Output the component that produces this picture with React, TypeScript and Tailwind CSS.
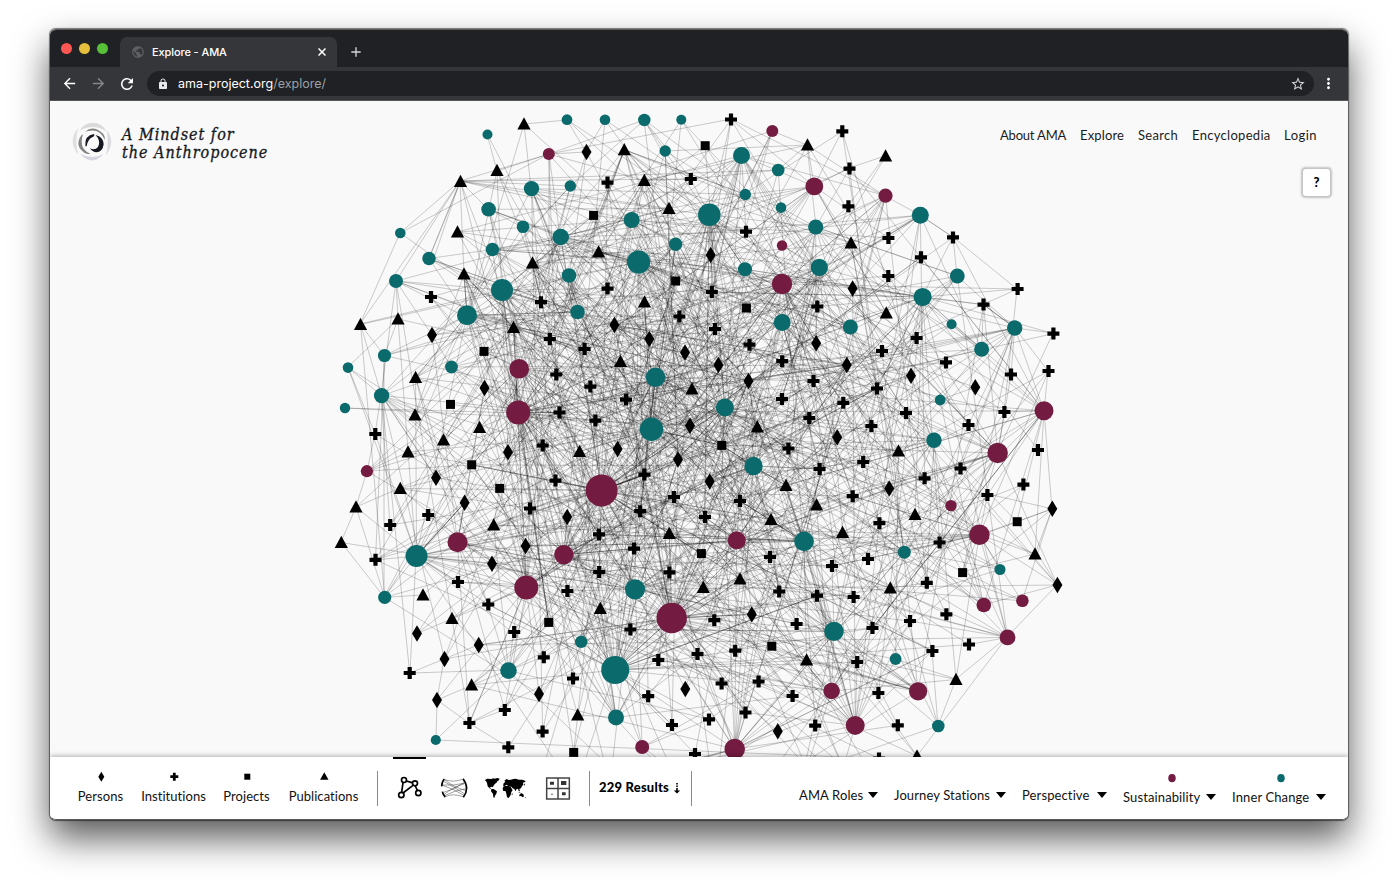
import React from "react";
import {
  MdAdd,
  MdArrowBack,
  MdArrowForward,
  MdLock,
  MdMoreVert,
  MdPublic,
  MdRefresh,
  MdStarBorder,
} from "react-icons/md";

type Pt = [number, number];
type Disc = [number, number, number];

const TEAL: Disc[] = [
  [487.5, 134.5, 5], [567, 119.7, 5.4], [605, 119.7, 5.3], [644.3, 120, 6.2], [681.3, 119.7, 5], [665.2, 151, 5.7],
  [741.5, 155.5, 8.5], [778.2, 170, 6.3], [531.5, 188.6, 7.7], [570.3, 186, 5.7], [745.3, 194.5, 5.7], [781, 207.6, 5.3],
  [488.6, 209.3, 7.3], [631.7, 220, 8], [709.3, 214.8, 11.3], [920.3, 215.3, 8.5], [523, 226.8, 6.3], [815.7, 227, 7.6],
  [400.3, 233, 5.3], [560.7, 237, 8.3], [675.6, 244.3, 6.7], [492.4, 249.5, 6.7], [429, 258.5, 6.7], [638.6, 262, 11.6],
  [819.3, 267.3, 8.6], [745, 269.3, 7], [569, 275.5, 7.3], [957.3, 276, 7.4], [396, 281, 7], [502, 290, 11],
  [922.6, 297, 9.1], [577.5, 312, 7.3], [467, 315.3, 10], [782.2, 322.5, 8.4], [951.6, 324.3, 5], [850.4, 327, 7.5],
  [1014.7, 328, 7.7], [981.6, 349.2, 7.5], [384.5, 355.5, 6.6], [451.5, 367, 6.4], [348, 367.6, 5.3], [655.5, 377.3, 9.7],
  [381.6, 395.6, 7.7], [940.2, 400, 5.4], [724.9, 407.5, 9], [345, 408, 5.2], [651.5, 429.3, 11.7], [934, 440.3, 7.7],
  [753.5, 466, 9.2], [804, 541.4, 9.8], [904.3, 552.2, 6.5], [416.5, 556, 11], [1000, 569.5, 5.5], [635, 589.3, 10.1],
  [384.7, 597.3, 6.6], [834, 631.4, 9.7], [581.2, 641.8, 6.2], [895.6, 659, 5.9], [508.5, 670.6, 8.3], [615.2, 670, 14],
  [616, 717.4, 8], [938.3, 726, 6.3], [435.8, 740, 5.1],
];

const WINE: Disc[] = [
  [772.3, 131, 6], [548.8, 154, 6], [814.3, 186.4, 8.9], [885.5, 195.7, 7.1], [782, 245.5, 5.2], [782, 284, 10.2],
  [519.1, 368.8, 9.8], [518.2, 412.4, 12], [1044, 410.8, 9.5], [997.7, 453, 10.2], [366.9, 471.2, 6.1], [601.6, 490.5, 16],
  [951, 505.6, 5.7], [979.4, 534.8, 10.3], [736.7, 540.3, 9], [457.5, 542.3, 10], [563.8, 554.6, 9.6], [526.3, 587.6, 12],
  [1022.4, 600.8, 6.3], [983.8, 605, 7.3], [671.7, 618, 15.2], [1007.5, 637.4, 7.9], [831.6, 691, 8.3], [918.1, 691.3, 9.1],
  [855.2, 725.4, 9.5], [642.2, 747, 7], [734.7, 749, 10.3],
];

const TRIANGLES: Pt[] = [
  [524, 124], [497, 170.5], [460.5, 181.5], [457.5, 232], [464, 274], [532.5, 263], [624.3, 149.7], [644.3, 180.5],
  [669, 208.5], [598.6, 252], [644.5, 302], [807.5, 145], [885.6, 156], [851, 243], [886.3, 313], [360.5, 324.5],
  [398, 319], [513.5, 327.5], [415.6, 377.5], [620.5, 361.5], [692, 389], [415, 415], [479.6, 427.5], [443.5, 440],
  [408, 452], [579.6, 451.5], [757.3, 427], [400.3, 488.5], [356, 507], [493.7, 525], [341.3, 542.5], [898.5, 451],
  [786, 485.5], [816.6, 505], [771, 519.5], [915, 514.5], [842.6, 532.5], [669.3, 533.5], [1035, 554], [703.3, 587.5],
  [740, 579], [890.3, 588], [423, 595], [452, 618.5], [600.3, 608.5], [806.6, 660], [956, 679.5], [471.6, 685],
  [577.7, 715], [917, 756],
];

const DIAMONDS: Pt[] = [
  [586.5, 152], [710.7, 255], [614.4, 325], [852.6, 288.5], [816.2, 343.3], [846.8, 365], [911, 375.8], [975.3, 387.2],
  [432, 335], [649.3, 339], [685, 352.5], [718.4, 365], [748.5, 381], [484.5, 388], [690, 425.7], [678, 459.5],
  [617.6, 449], [508, 452.3], [837.2, 437.3], [436, 477.7], [464.6, 502.7], [709.7, 481.5], [889.2, 488.5], [567.2, 517],
  [1052.3, 508.8], [525.6, 546], [492, 563.8], [1057.4, 585], [751.8, 614.4], [417, 633.5], [478.7, 645], [444.5, 659],
  [539, 694], [685.3, 689], [437, 700], [777.8, 731.3],
];

const SQUARES: Pt[] = [
  [705.2, 145.7], [593.6, 215.4], [675.6, 281], [746.4, 308], [484, 351.4], [450.5, 404.4], [471.7, 464.8],
  [499.7, 488.4], [721.8, 445.4], [1017.2, 521.7], [701.4, 553.6], [962.6, 572.6], [548.7, 622.4], [771.8, 646.2],
  [573.7, 752.4],
];

const CROSSES: Pt[] = [
  [731, 119.5], [842.3, 131.3], [849.5, 168.6], [848.4, 206.3], [888.4, 238], [953, 237.4], [921, 257.3], [888.3, 276],
  [1017.6, 289], [983.5, 304.6], [607.5, 182.6], [690.8, 179], [746, 231.7], [431, 297], [541, 302.2], [607.5, 288.6],
  [711.8, 292], [817.3, 306.5], [679.4, 316.5], [715, 329], [1053.4, 333.6], [549.8, 339], [584.6, 349], [749.5, 344.7],
  [916.6, 338], [882, 351], [946, 362.4], [782.2, 361.2], [556.3, 374.5], [1011, 374.5], [1048.5, 371], [590.4, 386.6],
  [813.5, 381], [877, 388.5], [626, 399.6], [782, 399], [843.3, 402.8], [559.5, 412.5], [595.4, 420.6], [906, 413],
  [1004.4, 412], [968.5, 425], [809.3, 418], [871.4, 426], [375.3, 434], [542.7, 445.5], [788.4, 448.5], [1038, 450],
  [863.2, 462], [819.6, 469], [960.5, 468.5], [644.4, 474.6], [555.5, 480.6], [924.6, 478.3], [1023.4, 484.6],
  [674, 497], [852.7, 496.2], [740, 501], [987.4, 495], [530, 508.5], [640.2, 511.2], [428.2, 515], [705, 517],
  [879.4, 523.2], [390.2, 525], [599, 534.4], [634, 548.6], [939.6, 542.5], [770, 557], [868, 559], [375.5, 559.8],
  [832, 566], [599.2, 572], [669.4, 572.4], [458, 582], [926.8, 582.8], [567.4, 591], [779.2, 591.5], [817, 595.7],
  [853.6, 597], [488.3, 604.5], [946.4, 614.3], [910, 621], [714.3, 620.2], [796.6, 624], [872.5, 628], [514.2, 632],
  [630.4, 629.5], [969, 644.5], [932.4, 651], [735.2, 650.7], [543.8, 657.3], [697.5, 654], [658.3, 660], [857.2, 662],
  [409.7, 673], [573, 678.5], [721.6, 683.5], [758.6, 681.5], [878.4, 693], [792.6, 696], [648.2, 696.2], [504.8, 710],
  [745.5, 712.5], [709, 719.4], [672, 725], [469.4, 723], [815.2, 725.6], [897.8, 725.3], [542.6, 731.6],
  [508.3, 747.3], [695, 754], [879, 758.5],
];

const BELOW: Pt[] = [
  [540, 778], [575, 790], [610, 785], [645, 800], [680, 790], [715, 800], [760, 790], [800, 790], [840, 780], [880, 790],
  [805, 765], [842, 765],
];

const RIM_LINKS: [number, number, number, number][] = [
  [524, 124, 567, 120], [524, 124, 531, 188], [487, 134, 497, 171], [460, 181, 400, 233], [400, 233, 360, 324],
  [460, 181, 396, 281], [460, 181, 429, 258], [460, 181, 549, 154], [460, 181, 502, 290], [460, 181, 464, 274],
  [460, 181, 488, 209], [460, 181, 434, 258], [460, 181, 631, 220], [460, 181, 778, 170], [460, 181, 709, 215],
  [460, 181, 570, 186], [460, 181, 691, 179], [460, 181, 745, 231], [497, 171, 549, 154], [497, 171, 508, 452],
  [497, 171, 577, 312], [549, 154, 644, 120], [549, 154, 731, 119], [549, 154, 586, 152], [549, 154, 549, 339],
  [549, 154, 560, 237], [567, 120, 586, 152], [605, 120, 586, 152], [605, 120, 669, 208], [681, 120, 705, 146],
  [644, 120, 691, 179], [644, 120, 660, 250], [644, 120, 745, 269], [731, 119, 885, 196], [731, 119, 711, 255],
  [772, 131, 807, 145], [772, 131, 607, 183], [772, 131, 745, 231], [842, 131, 814, 186], [807, 145, 885, 196],
  [807, 145, 665, 151], [807, 145, 778, 170], [807, 145, 816, 227], [849, 168, 885, 156], [849, 168, 814, 186],
  [885, 156, 848, 206], [885, 196, 920, 215], [920, 215, 953, 237], [953, 237, 1017, 289], [953, 237, 957, 276],
  [953, 237, 922, 297], [1017, 289, 1004, 412], [1017, 289, 922, 297], [957, 276, 1015, 328], [983, 304, 1015, 328],
  [1015, 328, 1053, 333], [1053, 333, 997, 453], [1048, 371, 1044, 411], [1015, 328, 1048, 371],
  [348, 367, 398, 319], [348, 367, 375, 434], [345, 408, 518, 413], [375, 434, 381, 395], [375, 434, 367, 471],
  [367, 471, 356, 507], [367, 471, 408, 452], [367, 471, 472, 465], [356, 507, 341, 542], [356, 507, 416, 556],
  [341, 542, 384, 597], [384, 597, 416, 556], [384, 597, 428, 515], [375, 560, 416, 556], [410, 673, 416, 556],
  [410, 673, 508, 670], [410, 673, 478, 645], [437, 700, 436, 740], [437, 700, 508, 670], [437, 700, 444, 659],
  [469, 723, 437, 700], [469, 723, 504, 710], [469, 723, 508, 747], [384, 597, 539, 694], [384, 597, 457, 542],
  [938, 726, 932, 651], [938, 726, 956, 679], [938, 726, 840, 760], [956, 679, 1007, 637], [956, 679, 895, 659],
  [1007, 637, 1057, 585], [983, 605, 1057, 585], [1052, 509, 1044, 411], [1052, 509, 979, 535], [1052, 509, 1035, 554],
  [1035, 554, 962, 572], [1057, 585, 1017, 521], [1022, 601, 979, 535], [1022, 601, 1052, 509], [1044, 411, 1017, 521],
  [360, 324, 460, 181], [360, 324, 502, 290], [360, 324, 384, 355], [384, 355, 384, 597], [381, 395, 390, 525],
  [398, 319, 416, 556], [396, 281, 398, 319], [396, 281, 381, 395], [396, 281, 432, 335], [917, 756, 1007, 637],
];

function makeRandom(seed: number) {
  let s = seed;
  return () => {
    s = (s + 0x6d2b79f5) | 0;
    let t = Math.imul(s ^ (s >>> 15), 1 | s);
    t = (t + Math.imul(t ^ (t >>> 7), 61 | t)) ^ t;
    return ((t ^ (t >>> 14)) >>> 0) / 4294967296;
  };
}

function buildLinks() {
  const rnd = makeRandom(229);
  const discs = [...TEAL, ...WINE];
  const marks: Pt[] = [...TRIANGLES, ...DIAMONDS, ...SQUARES, ...CROSSES, ...BELOW];
  const all: Pt[] = [...discs.map(([x, y]) => [x, y] as Pt), ...marks];
  const out: string[] = [];
  const pick = (x: number, y: number, pool: Pt[], reach: number) => {
    for (let i = 0; i < 60; i++) {
      const p = pool[Math.floor(rnd() * pool.length)];
      const d = Math.hypot(p[0] - x, p[1] - y);
      const rim = Math.hypot(p[0] - 700, p[1] - 440) / 370;
      if (d > 20 && rnd() < Math.exp(-d / reach) * (1.15 - rim * 0.8)) return p;
    }
    return null;
  };
  const add = (x: number, y: number, pool: Pt[], reach: number) => {
    const p = pick(x, y, pool, reach);
    if (p) out.push(`M${x} ${y}L${p[0]} ${p[1]}`);
  };
  discs.forEach(([x, y, r]) => {
    const n = Math.round(Math.pow(Math.max(r - 4.4, 0.4), 1.55) * 1.25);
    for (let i = 0; i < n; i++) add(x, y, all, 200);
  });
  const hubs = discs.filter((d) => d[2] > 7.5).map(([x, y]) => [x, y] as Pt);
  marks.forEach(([x, y]) => {
    const inner = Math.hypot(x - 700, y - 430) < 230;
    const n = inner ? 2 : 1;
    for (let i = 0; i < n; i++) add(x, y, hubs, 230);
  });
  const busy: Pt[] = [
    [464, 274], [644.3, 180.5], [624.3, 149.7], [532.5, 263], [846.8, 365], [690, 425.7], [721.8, 445.4], [614.4, 325],
    [678, 459.5], [748.5, 381], [513.5, 327.5], [877, 388.5],
  ];
  busy.forEach(([x, y]) => {
    for (let i = 0; i < 15; i++) add(x, y, all, 190);
  });
  RIM_LINKS.forEach(([a, b, c, d]) => out.push(`M${a} ${b}L${c} ${d}`));
  return out;
}

const LINKS = buildLinks();

function Network() {
  return (
    <svg className="absolute inset-0 h-full w-full" viewBox="50 101 1298 656" preserveAspectRatio="none">
      <g stroke="#000" strokeOpacity=".22" strokeWidth=".9" fill="none">
        {LINKS.map((d, i) => (
          <path key={i} d={d} />
        ))}
      </g>
      <g fill="#0b6a6b">
        {TEAL.map(([x, y, r], i) => (
          <circle key={i} cx={x} cy={y} r={r} />
        ))}
      </g>
      <g fill="#731b41">
        {WINE.map(([x, y, r], i) => (
          <circle key={i} cx={x} cy={y} r={r} />
        ))}
      </g>
      {TRIANGLES.map(([x, y], i) => (
        <path key={i} d={`M${x} ${y - 6.8}l6.6 12.3h-13.2z`} />
      ))}
      {DIAMONDS.map(([x, y], i) => (
        <path key={i} d={`M${x} ${y - 8.2}l5 8.2l-5 8.2l-5 -8.2z`} />
      ))}
      {SQUARES.map(([x, y], i) => (
        <rect key={i} x={x - 4.5} y={y - 4.5} width="9" height="9" />
      ))}
      {CROSSES.map(([x, y], i) => (
        <path key={i} d={`M${x - 6} ${y}h12M${x} ${y - 6}v12`} stroke="#000" strokeWidth="4.2" />
      ))}
    </svg>
  );
}

function Logo() {
  return (
    <svg className="h-10 w-10" viewBox="96 307 120 120" fill="none">
      <path d="M118 334Q132 309 160 309Q188 311 199 335Q180 322 158 322Q136 322 118 334Z" fill="#dadada" />
      <path d="M114 326Q96 347 98 370Q101 391 115 404Q109 386 109 366Q109 346 114 326Z" fill="#dfdfdf" />
      <path d="M201 330Q216 352 213 374Q210 393 197 407Q203 388 203 370Q203 350 201 330Z" fill="#dcdce0" />
      <path d="M120 402Q156 422 191 403Q156 442 120 402Z" fill="#d5d6e0" />
      <path d="M135 337Q158 314 190 343Q196 351 194 361Q182 331 153 333Q143 333 135 337Z" fill="#858585" />
      <path d="M124 347Q102 379 134 400Q143 404 151 402Q125 391 125 367Q125 355 129 344Z" fill="#858585" />
      <path d="M167 346Q190 351 191 374Q188 397 169 398Q157 397 150 386Q165 393 174 382Q184 365 167 346Z" fill="#161821" />
      <path d="M136 379Q133 347 162 343Q166 346 160 351Q143 357 140 380Z" fill="#161821" />
    </svg>
  );
}

const NAV: [string, string][] = [
  ["About AMA", "w-[67px] tracking-[-0.2px]"],
  ["Explore", "w-[45px] tracking-[0.15px]"],
  ["Search", "w-[41px] tracking-[0.3px]"],
  ["Encyclopedia", "w-[79px] tracking-[0.3px]"],
  ["Login", "w-[33px] tracking-[0.45px]"],
];

function Kind({ label, width, children }: { label: string; width: string; children: React.ReactNode }) {
  return (
    <div className={`flex flex-col items-center ${width}`}>
      <svg className="h-3 w-3" viewBox="-6.300 -5.700 12 12">
        {children}
      </svg>
      <span className="mt-[4px] text-[13px] leading-[18px] tracking-[0.050px] whitespace-nowrap">{label}</span>
    </div>
  );
}

function Filter({ label, width, dot }: { label: string; width: string; dot?: string }) {
  return (
    <div className="flex flex-col">
      <div className="flex h-3 justify-center pl-[4px]">
        {dot && (
          <svg className="h-3 w-3" viewBox="-6 -6 12 12">
            <ellipse cy=".2" rx="3.7" ry="4.1" fill={dot} />
          </svg>
        )}
      </div>
      <div className={`flex items-center ${dot ? "mt-[4px]" : "mt-[2px]"}`}>
        <span className={`text-[13px] leading-[18px] tracking-[0.120px] whitespace-nowrap ${width}`}>{label}</span>
        <svg className="ml-[5px] h-[6px] w-[10px]" viewBox="0 0 10 6">
          <path d="M0 0h10L5 6z" />
        </svg>
      </div>
    </div>
  );
}

function BottomBar() {
  return (
    <footer className="relative flex h-[62px] bg-white pl-[27px] font-['Lato','Open_Sans',sans-serif] text-[#111] shadow-[0_-1px_5px_rgba(0,0,0,0.3)] [font-variant-ligatures:none]">
      <div className="flex gap-[18px] pt-[14px]">
        <Kind label="Persons" width="w-[47px]">
          <path d="M0-5l3 5l-3 5l-3-5z" />
        </Kind>
        <Kind label="Institutions" width="w-[63px]">
          <path d="M-4 0h8M0-4v8" stroke="#000" strokeWidth="2.8" />
        </Kind>
        <Kind label="Projects" width="w-[47px]">
          <rect x="-3" y="-3" width="6" height="6" />
        </Kind>
        <Kind label="Publications" width="w-[71px]">
          <path d="M0-4.500l4.200 7.500h-8.400z" />
        </Kind>
      </div>
      <div className="mt-[14px] ml-[18px] h-[35px] w-px bg-[#8a8a8a]" />
      <div className="flex">
        <div className="ml-[15px] flex w-[33px] flex-col items-center border-t-2 border-black pt-[17px]">
          <svg className="h-[23.33px] w-[26.67px]" viewBox="80 92 80 70" fill="none" stroke="#000" strokeWidth="5">
            <path d="M111 107l17 5M101 112L97 141M131 120L101 143M138 122l6 13" />
            <circle cx="104" cy="104" r="7.5" />
            <circle cx="137" cy="114" r="7.5" />
            <circle cx="96" cy="149" r="8" />
            <circle cx="147" cy="143" r="8" />
          </svg>
        </div>
        <svg className="mt-[18.67px] ml-[14px] h-[24px] w-[28px]" viewBox="211 92 84 72" fill="none" stroke="#000">
          <path d="M224 101Q217 108 216 123M218 139Q220 149 227 155M280 100Q301 128 281 156" strokeWidth="5" />
          <path
            d="M225 103Q250 112 279 102M222 108Q250 124 284 145M218 119Q250 122 288 113M219 142Q250 135 286 110M223 148Q250 125 285 115M227 154Q250 143 280 154M219 120Q250 130 283 150M225 151Q255 135 289 130M225 103Q250 125 289 136"
            stroke="#444"
            strokeWidth="1.5"
          />
        </svg>
        <svg className="mt-[18.67px] ml-[16px] h-[24px] w-[43px]" viewBox="343 92 129 72">
          <path d="M345 105L352 100L365 101L371 99L380 102L383 110L378 114L373 119L369 126L365 124L360 127L365 131L362 131L354 123L352 113L349 107Z" />
          <path d="M375 100L383 98L390 100L385 108L380 106Z" />
          <path d="M365 131L372 131L382 138L380 145L376 151L374 158L371 156L370 146L364 138Z" />
          <path d="M399 129L402 123L415 121L423 124L427 132L429 135L425 140L423 149L417 158L412 156L410 145L408 138L400 136Z" />
          <path d="M400 121L402 114L407 109L404 106L411 101L417 104L424 103L431 101L438 100L448 103L458 103L468 107L466 110L460 112L461 119L457 122L454 129L449 131L451 138L447 137L445 130L440 132L438 138L434 131L429 129L425 124L417 123L411 118L405 122Z" />
          <path d="M449 148L455 143L461 147L463 153L459 156L454 152L449 153ZM446 139L454 143L448 142ZM425 146L429 144L428 150ZM463 118L466 114L466 121ZM465 157L468 154L467 159Z" />
        </svg>
        <svg className="mt-[18.67px] ml-[17px] h-[24px] w-[28px]" viewBox="522 92 84 72">
          <path d="M530 98h68v63h-68zM564 98v63M530 129.500h68" fill="none" stroke="#444" strokeWidth="4.500" />
          <path d="M540 109h12v9h-12zM573 107h16v12h-16zM543 145h6v2.500h-6zM576 141h11v9h-11z" fill="#333" />
        </svg>
      </div>
      <div className="mt-[14px] ml-[17px] h-[35px] w-px bg-[#8a8a8a]" />
      <div className="mt-[22px] ml-[9px] flex h-[18px] w-[92px] items-center text-[13px] font-black tracking-[0.200px] whitespace-nowrap text-black">
        <span className="w-[74px]">229 Results</span>
        <svg className="h-[11px] w-[8px]" viewBox="0 0 8 11">
          <path d="M3.200 0h1.600v1.500h-1.600zM3.200 2.600h1.600v1.500h-1.600zM3.200 5.100h1.600v2.300h2.400L4 10.500L.8 7.400h2.400z" />
        </svg>
      </div>
      <div className="mt-[14px] h-[35px] w-px bg-[#8a8a8a]" />
      <div className="ml-auto flex gap-[16px] pt-[15px] pr-[22px]">
        <Filter label="AMA Roles" width="w-[64px]" />
        <Filter label="Journey Stations" width="w-[97px]" />
        <Filter label="Perspective" width="w-[70px]" />
        <Filter label="Sustainability" width="w-[78px]" dot="#731b41" />
        <Filter label="Inner Change" width="w-[79px]" dot="#0b6a6b" />
      </div>
    </footer>
  );
}

function Chrome() {
  return (
    <div className="font-['Inter','Roboto',sans-serif]">
      <div className="flex h-[37px] bg-[#202124]">
        <div className="flex w-[70px] gap-[7px] pt-[13px] pl-[11px]">
          <span className="h-[11px] w-[11px] rounded-full bg-[#fc5753]" />
          <span className="h-[11px] w-[11px] rounded-full bg-[#e5bf3c]" />
          <span className="h-[11px] w-[11px] rounded-full bg-[#57c038]" />
        </div>
        <div className="mt-[7px] flex h-[30px] w-[217px] items-center rounded-t-[7px] bg-[#35363a] pr-[11px] pl-[11px] text-white">
          <MdPublic className="h-[14px] w-[14px] text-[#5f6064]" />
          <span className="ml-[7px] flex-1 pt-[1px] text-[11px] font-medium tracking-[-0.100px]">Explore - AMA</span>
          <svg className="h-[8px] w-[8px]" viewBox="0 0 8 8">
            <path d="M.5.5l7 7M7.500.5l-7 7" stroke="#fff" strokeWidth="1.500" />
          </svg>
        </div>
        <MdAdd className="mt-[14px] ml-[11px] h-[16px] w-[16px] text-[#d5d6d8]" />
      </div>
      <div className="flex h-[34px] items-center border-b border-[#555558] bg-[#35363a] pl-[11px] text-white">
        <MdArrowBack className="h-[17px] w-[17px]" />
        <MdArrowForward className="ml-[12px] h-[17px] w-[17px] text-[#85868a]" />
        <MdRefresh className="ml-[11px] h-[18px] w-[18px]" />
        <div className="ml-[11px] flex h-[25px] w-[1167px] items-center rounded-full bg-[#202124] pr-[8px] pl-[10px]">
          <MdLock className="h-[12px] w-[12px] text-[#e8eaed]" />
          <span className="ml-[9px] flex-1 pt-[1px] text-[12.500px] text-[#9aa0a6]">
            <span className="text-white">ama-project.org</span>/explore/
          </span>
          <MdStarBorder className="h-[16px] w-[16px] text-[#d0d2d6]" />
        </div>
        <MdMoreVert className="ml-[6px] h-[17px] w-[17px]" />
      </div>
    </div>
  );
}

export default function App() {
  return (
    <div className="h-[883px] w-[1400px] overflow-hidden bg-white pt-[29px] pl-[50px]">
      <div className="h-[791px] w-[1298px] rounded-[6px] shadow-[0_18px_36px_rgba(0,0,0,0.66),0_0_1px_0.500px_rgba(0,0,0,0.5)]">
        <div className="flex h-full flex-col overflow-hidden rounded-[6px] border-t border-b border-[#5b5b5b] bg-[#f9f9f9]">
          <Chrome />
          <main className="relative min-h-0 flex-1">
            <Network />
            <div className="relative flex justify-between pt-[21px] pr-[31px] pl-[22px]">
              <div className="flex">
                <Logo />
                <h1 className="mt-[4px] ml-[10px] font-['DejaVu_Serif_Condensed','DejaVu_Serif',serif] text-[16px] leading-[18px] tracking-[0.980px] whitespace-nowrap text-[#161821] italic [-webkit-text-stroke:0.300px_#161821]">
                  A Mindset for
                  <br />
                  the Anthropocene
                </h1>
              </div>
              <nav className="flex gap-[13px] pt-[4px] font-['Lato','Open_Sans',sans-serif] text-[13px] leading-[18px] whitespace-nowrap text-[#1c1c1c]">
                {NAV.map(([label, cls]) => (
                  <a key={label} className={cls}>
                    {label}
                  </a>
                ))}
              </nav>
            </div>
            <div className="relative flex justify-end pt-[7px] pr-[18px]">
              <button className="h-[27px] w-[27px] rounded-[3px] bg-white pt-[1px] font-['Lato',sans-serif] text-[13px] font-black text-black shadow-[0_0_2px_1.500px_rgba(0,0,0,0.22)]">
                ?
              </button>
            </div>
          </main>
          <BottomBar />
        </div>
      </div>
    </div>
  );
}
